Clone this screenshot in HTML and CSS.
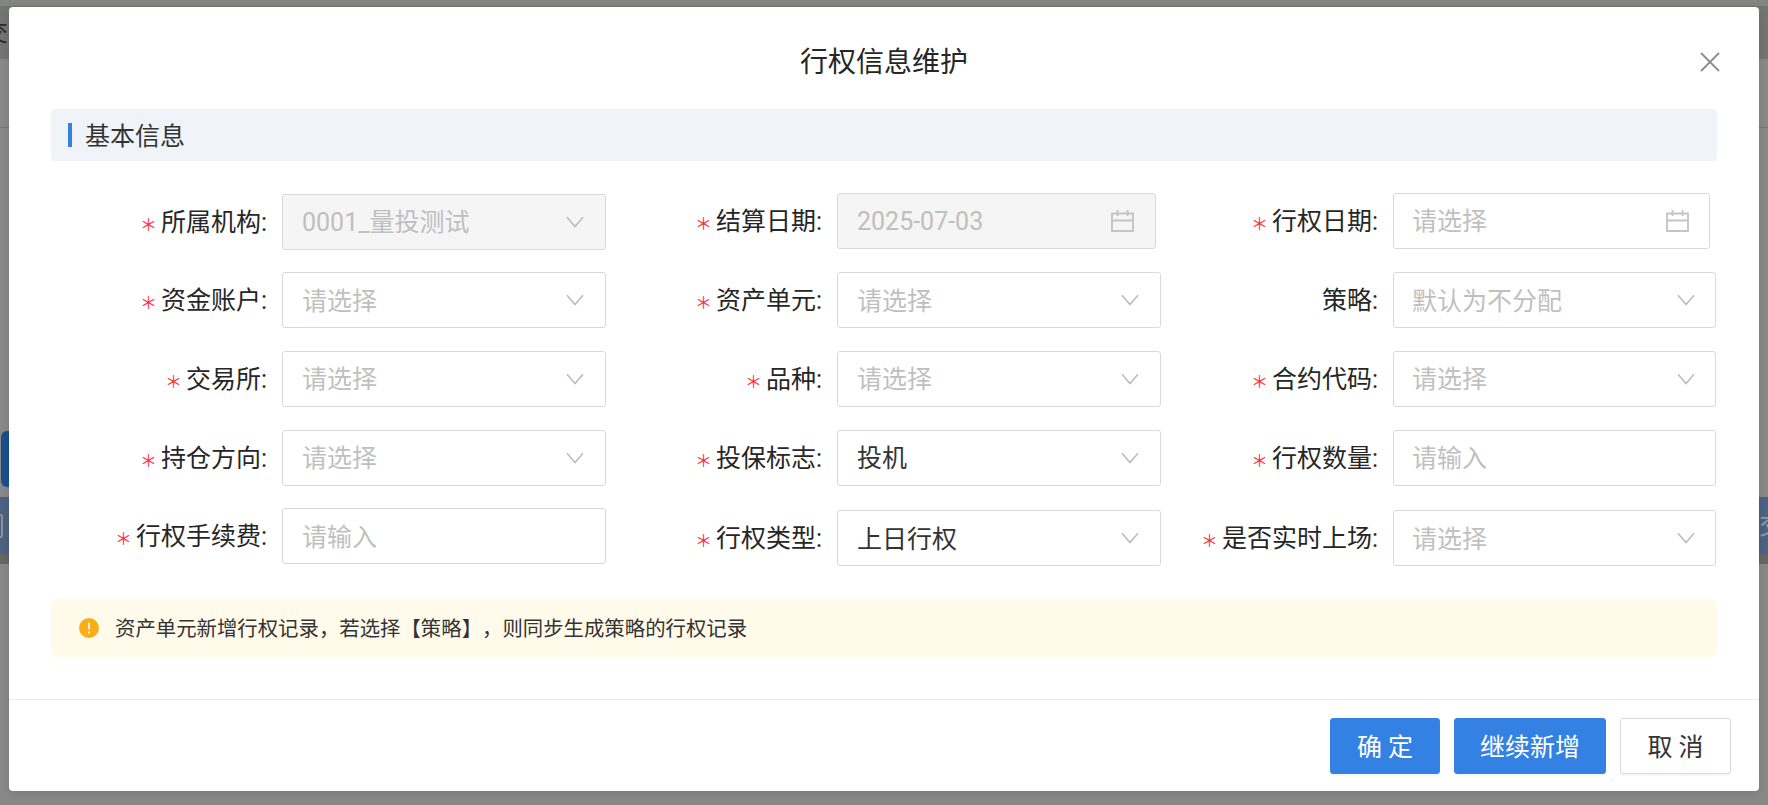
FILE: index.html
```html
<!DOCTYPE html>
<html lang="zh-CN">
<head>
<meta charset="utf-8">
<title>行权信息维护</title>
<link rel="stylesheet" href="styles.css">
</head>
<body>
<svg class="defs" width="0" height="0" aria-hidden="true">
  <symbol id="chev" viewBox="0 0 18 12"><path d="M1 1.2 9 10.6 17 1.2" fill="none" stroke="currentColor" stroke-width="1.5"/></symbol>
  <symbol id="cal" viewBox="0 0 23 22"><path d="M1 3.5H22V21H1ZM1 10.5H22M6.5 0V6M16.5 0V6" fill="none" stroke="currentColor" stroke-width="1.8"/></symbol>
</svg>
<div class="page">
  <div class="page-top"><span class="page-top-text">交</span></div>
  <div class="page-main">
    <div class="page-line"></div>
    <button class="page-btn" type="button"></button>
    <div class="page-thead"><span class="page-check"></span><span class="page-thead-text">交</span></div>
    <div class="page-tfoot"></div>
  </div>
</div>
<div class="modal">
  <header class="modal-head">
    <h1 class="modal-title">行权信息维护</h1>
    <svg class="modal-close" viewBox="0 0 20 20"><path d="M1 1 19 19M19 1 1 19" fill="none" stroke="currentColor" stroke-width="1.8"/></svg>
  </header>
  <div class="modal-body">
    <div class="section"><span class="section-bar"></span><span class="section-text">基本信息</span></div>
    <div class="form">
      <div class="item"><label class="label req">所属机构:</label><div class="ctl disabled"><span class="ph">0001_量投测试</span><svg class="chev"><use href="#chev"/></svg></div></div>
      <div class="item up"><label class="label req">结算日期:</label><div class="ctl disabled date"><span class="ph">2025-07-03</span><svg class="cal"><use href="#cal"/></svg></div></div>
      <div class="item up"><label class="label req">行权日期:</label><div class="ctl date"><span class="ph">请选择</span><svg class="cal"><use href="#cal"/></svg></div></div>

      <div class="item"><label class="label req">资金账户:</label><div class="ctl"><span class="ph">请选择</span><svg class="chev"><use href="#chev"/></svg></div></div>
      <div class="item"><label class="label req">资产单元:</label><div class="ctl"><span class="ph">请选择</span><svg class="chev"><use href="#chev"/></svg></div></div>
      <div class="item"><label class="label">策略:</label><div class="ctl"><span class="ph">默认为不分配</span><svg class="chev"><use href="#chev"/></svg></div></div>

      <div class="item"><label class="label req">交易所:</label><div class="ctl"><span class="ph">请选择</span><svg class="chev"><use href="#chev"/></svg></div></div>
      <div class="item"><label class="label req">品种:</label><div class="ctl"><span class="ph">请选择</span><svg class="chev"><use href="#chev"/></svg></div></div>
      <div class="item"><label class="label req">合约代码:</label><div class="ctl"><span class="ph">请选择</span><svg class="chev"><use href="#chev"/></svg></div></div>

      <div class="item"><label class="label req">持仓方向:</label><div class="ctl"><span class="ph">请选择</span><svg class="chev"><use href="#chev"/></svg></div></div>
      <div class="item"><label class="label req">投保标志:</label><div class="ctl"><span class="val">投机</span><svg class="chev"><use href="#chev"/></svg></div></div>
      <div class="item"><label class="label req">行权数量:</label><div class="ctl"><span class="ph">请输入</span></div></div>

      <div class="item"><label class="label req">行权手续费:</label><div class="ctl"><span class="ph">请输入</span></div></div>
      <div class="item down"><label class="label req">行权类型:</label><div class="ctl"><span class="val">上日行权</span><svg class="chev"><use href="#chev"/></svg></div></div>
      <div class="item down"><label class="label req">是否实时上场:</label><div class="ctl"><span class="ph">请选择</span><svg class="chev"><use href="#chev"/></svg></div></div>
    </div>
    <div class="alert">
      <svg class="alert-icon" viewBox="0 0 20 20"><circle cx="10" cy="10" r="10" fill="#faad14"/><path d="M10 4.6V11.6M10 13.6V15.4" stroke="#fff" stroke-width="1.7" fill="none"/></svg>
      <span class="alert-text">资产单元新增行权记录，若选择【策略】，则同步生成策略的行权记录</span>
    </div>
  </div>
  <footer class="modal-foot">
    <button class="btn primary ok" type="button">确 定</button>
    <button class="btn primary more" type="button">继续新增</button>
    <button class="btn cancel" type="button">取 消</button>
  </footer>
</div>
</body>
</html>
```
FILE: styles.css
```css
* { box-sizing: border-box; }
html, body { margin: 0; padding: 0; height: 100%; overflow: hidden; }
body {
  font-family: Roboto, "Noto Sans CJK SC", sans-serif;
  background: #878887;
  color: #262626;
  text-spacing-trim: space-all;
}
.defs { display: block; height: 0; }

/* dimmed page behind the dialog */
.page { display: flex; flex-direction: column; height: 805px; }
.page-top {
  height: 59px;
  background: linear-gradient(#838583 0, #838583 6px, #747474 6px);
  padding-top: 18px;
  overflow: hidden;
  display: flex;
  justify-content: flex-start;
}
.page-top-text { font-size: 24px; line-height: 30px; color: #2a2a2a; margin-left: -16px; }
.page-main { flex: 1; display: flex; flex-direction: column; }
.page-line { height: 1px; margin-top: 68px; background: #767676; }
.page-btn {
  width: 60px; height: 56px; margin: 303px 0 0 1px; padding: 0;
  border: 0; border-radius: 6px; background: #1b4f8e;
}
.page-thead {
  height: 57px; margin-top: 10px; background: #4c6282;
  display: flex; align-items: center; justify-content: space-between; overflow: hidden;
}
.page-check { width: 22px; height: 24px; margin-left: -19px; border: 2px solid #8d8f92; border-radius: 2px; }
.page-thead-text { font-size: 24px; line-height: 30px; color: #8f98a6; margin-right: -15px; }
.page-tfoot { height: 10px; background: #666; }

/* dialog */
.modal {
  position: absolute; left: 9px; top: 7px;
  width: 1750px; height: 784px;
  background: #fff; border-radius: 4px;
  box-shadow: 0 2px 10px rgba(0,0,0,.12);
  display: flex; flex-direction: column;
}
.modal-head {
  height: 102px; padding: 0 42px;
  display: flex; align-items: flex-start; justify-content: center;
  position: relative;
}
.modal-title { margin: 34px 0 0; font-size: 28px; line-height: 44px; font-weight: 400; color: #262626; }
.modal-close { position: absolute; right: 39px; top: 45px; width: 20px; height: 20px; color: #8c8c8c; }
.modal-body { flex: 1; padding: 0 42px; }

.section {
  height: 52px; padding-left: 17px; border-radius: 4px; background: #f0f4f8;
  display: flex; align-items: center;
}
.section-bar { width: 4px; height: 24px; margin-right: 13px; background: #3381e3; }
.section-text { font-size: 25px; line-height: 34px; color: #333; padding-top: 3px; }

.form {
  margin: 32.7px 1px 0 0;
  display: grid;
  grid-template-columns: repeat(3, 1fr);
  grid-auto-rows: 56px;
  row-gap: 22.65px;
}
.item { display: grid; grid-template-columns: 1fr 324px; align-items: start; }
.item:nth-child(3n) { grid-template-columns: 1fr 323px; }
.item.up { transform: translateY(-1px); }
.item.down { transform: translateY(2px); }
.label {
  padding: 1px 15px 0 0; text-align: right;
  font-size: 25px; line-height: 56px; color: #262626; white-space: nowrap;
}
.label.req::before {
  content: "＊"; display: inline-block; margin-right: 4px;
  font-family: "Noto Sans CJK SC", sans-serif; font-size: 17px; line-height: 1;
  color: #ff3346;
}
.ctl {
  height: 56px; padding: 3px 21px 0 19px;
  border: 1px solid #d9d9d9; border-radius: 3px; background: #fff;
  display: flex; align-items: center; justify-content: space-between;
  font-size: 25px; line-height: 34px;
}
.item:nth-child(3n) .ctl { padding-left: 18px; padding-right: 20px; }
.ctl.disabled { background: #f5f5f5; }
.ctl.date { width: 98.4%; }
.item:nth-child(3n) .ctl.date { width: 98.1%; }
.ph { color: #bfbfbf; }
.val { color: #333; }
.chev { width: 18px; height: 12px; color: #bbb; flex: none; margin-top: -3px; }
.cal { width: 23px; height: 22px; color: #c4c4c4; flex: none; margin-top: -3px; }

.alert {
  margin-top: 35px; height: 58px; padding-left: 28px; border-radius: 6px;
  background: #fffaea; display: flex; align-items: center;
}
.alert-icon { width: 20px; height: 20px; margin-right: 16px; flex: none; }
.alert-text { font-size: 20.4px; line-height: 30px; color: #333; padding-top: 1px; }

.modal-foot {
  height: 92px; padding: 18px 28px 0 0;
  border-top: 1px solid #e8e8e8;
  display: flex; justify-content: flex-end; gap: 14px;
}
.btn {
  height: 56px; padding: 0 0 3px; border-radius: 3px; font: inherit; font-size: 25px;
  box-shadow: 0 2px 0 rgba(0,0,0,.03);
}
.primary { border: 1px solid #3381e3; background: #3381e3; color: #fff; }
.ok { width: 110px; }
.more { width: 152px; }
.cancel { width: 111px; border: 1px solid #d9d9d9; background: #fff; color: #333; }
```
